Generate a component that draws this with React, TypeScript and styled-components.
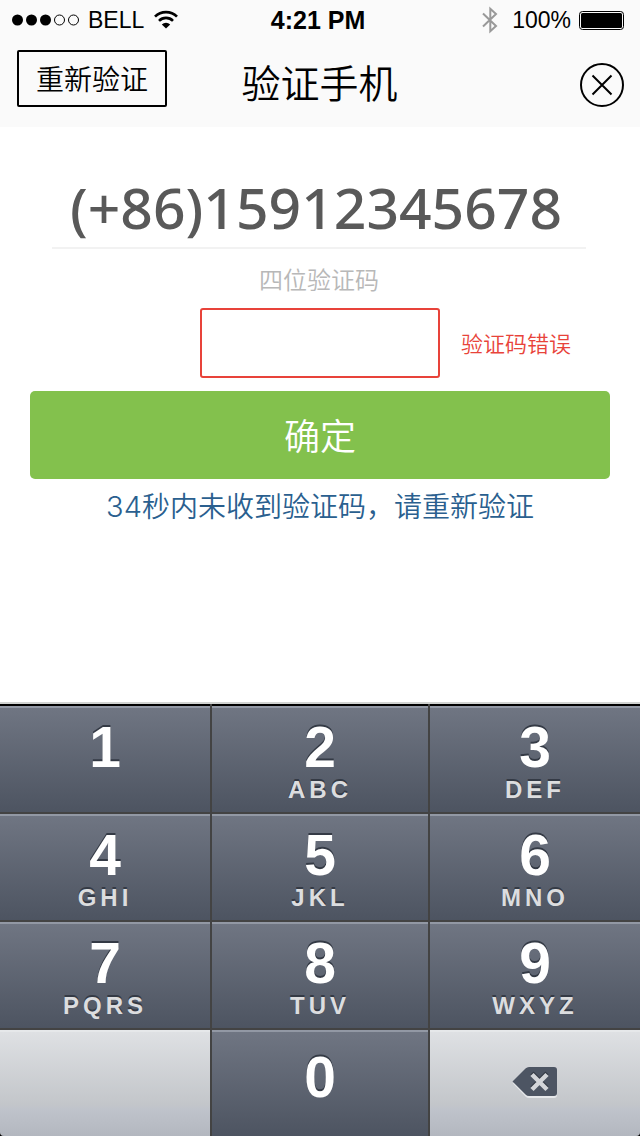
import React, { useState } from "react";
import styled, { createGlobalStyle, css } from "styled-components";

const GlobalStyle = createGlobalStyle`
  *, *::before, *::after { box-sizing: border-box; }
  body {
    margin: 0;
    background: #fff;
    font-family: "Noto Sans CJK SC", sans-serif;
    font-weight: 350;
  }
  button, input { font: inherit; color: inherit; margin: 0; padding: 0; }
  button { cursor: pointer; }
  svg { display: block; }
`;

const Page = styled.div`
  display: flex;
  flex-direction: column;
  min-height: 100vh;
`;

const Header = styled.header`
  background: #fafafa;
  color: #000;
`;

const StatusBar = styled.div`
  display: grid;
  grid-template-columns: 1fr auto 1fr;
  align-items: center;
  height: 40px;
  padding: 0 16px 0 12px;
  font: 400 23px/40px "Liberation Sans", sans-serif;
`;

const StatusGroup = styled.div<{ $end?: boolean }>`
  display: flex;
  align-items: center;
  justify-content: ${(p) => (p.$end ? "flex-end" : "flex-start")};
  gap: 8px;
`;

const Clock = styled.time`
  font-size: 25px;
  font-weight: 700;
`;

const NavBar = styled.nav`
  display: grid;
  grid-template-columns: 1fr auto 1fr;
  align-items: center;
  height: 87px;
  padding: 0 16px 11px 17px;
`;

const RetryButton = styled.button`
  justify-self: start;
  width: 150px;
  height: 57px;
  border: 2px solid #000;
  border-radius: 2px;
  background: transparent;
  font-size: 28px;
  line-height: 53px;
`;

const Title = styled.h1`
  margin: 0;
  padding: 6px 2px 0 0;
  font-size: 39px;
  font-weight: 350;
  line-height: 56px;
`;

const CloseButton = styled.button`
  justify-self: end;
  margin-top: 13px;
  border: 0;
  background: transparent;
`;

const Form = styled.form`
  flex: 1;
  display: flex;
  flex-direction: column;
  padding: 40px 30px 0;
`;

const Phone = styled.output`
  margin: 0 24px 0 22px;
  padding-right: 6px;
  border-bottom: 2px solid #f2f2f2;
  color: #595959;
  font: 500 57px/80px "Noto Sans", sans-serif;
  text-align: center;
  white-space: nowrap;
`;

const CodeLabel = styled.label`
  align-self: center;
  margin: 12px 2px 11px 0;
  color: #b8b8b8;
  font-size: 24px;
  line-height: 36px;
`;

const CodeRow = styled.div`
  display: grid;
  grid-template-columns: 1fr 240px 1fr;
  align-items: center;
  margin-bottom: 13px;
`;

const CodeInput = styled.input`
  grid-column: 2;
  width: 100%;
  height: 70px;
  border: 2px solid #e8433a;
  border-radius: 3px;
  outline: 0;
  background: #fff;
  color: #595959;
  font-size: 36px;
  text-align: center;
`;

const ErrorText = styled.span`
  padding: 0 0 2px 21px;
  color: #e8433a;
  font-size: 22px;
  line-height: 32px;
`;

const SubmitButton = styled.button`
  height: 88px;
  padding-bottom: 2px;
  border: 0;
  border-radius: 5px;
  background: #83c14d;
  color: #fff;
  font-size: 36px;
  line-height: 86px;
`;

const ResendLink = styled.a`
  align-self: center;
  margin: 6px 0 24px;
  color: #2a5f8f;
  font-size: 28px;
  line-height: 40px;
  text-decoration: none;
`;

const Seconds = styled.span`
  font-family: Inter, sans-serif;
  font-size: 29px;
  font-weight: 300;
`;

const KeypadFrame = styled.section`
  border-top: 2px solid #d0d2d0;
  background: #000;
`;

const Keypad = styled.div`
  display: grid;
  grid-template-columns: 210fr 216fr 210fr;
  grid-auto-rows: 106px;
  gap: 2px;
  padding-top: 2px;
  border-radius: 0 0 4px 4px;
  background: #434343;
  overflow: hidden;
`;

const lightKey = css`
  background: linear-gradient(#dfe1e4, #c3c6ca 70%, #bfc3cb 75%, #b3b7bf);
  box-shadow: inset 0 2px 0 #e6e8ea;
`;

const darkKey = css`
  background: linear-gradient(#707683, #4d5461);
  box-shadow: inset 0 2px 0 #9298a4;
`;

const Key = styled.button<{ $light?: boolean; $zero?: boolean }>`
  display: flex;
  flex-direction: column;
  align-items: center;
  justify-content: ${(p) => (p.$light ? "center" : "flex-start")};
  padding: ${(p) => (p.$light ? "0 0 2px" : p.$zero ? "16px 0 0" : "10px 0 0")};
  border: 0;
  ${(p) => (p.$light ? lightKey : darkKey)}

  &:nth-child(-n + 3) {
    box-shadow: inset 0 2px 0 #9298a4, 0 -2px 0 #000;
  }
`;

const Digit = styled.span`
  color: #fff;
  font: 700 57px/62px "Liberation Sans", sans-serif;
  text-shadow: 0 -2px 0 #343a45;
`;

const Letters = styled.span`
  color: #dcdddf;
  font: 700 24px/24px "Liberation Sans", sans-serif;
  letter-spacing: 4px;
  text-shadow: 0 -2px 0 #343a45;
`;

const KEYS: [string, string][] = [
  ["1", ""],
  ["2", "ABC"],
  ["3", "DEF"],
  ["4", "GHI"],
  ["5", "JKL"],
  ["6", "MNO"],
  ["7", "PQRS"],
  ["8", "TUV"],
  ["9", "WXYZ"],
];

const SignalIcon = () => (
  <svg width="68" height="14" viewBox="0 0 68 14" aria-hidden="true">
    {[0, 1, 2, 3, 4].map((i) => (
      <circle
        key={i}
        cx={5.5 + i * 14}
        cy="7"
        r={i < 3 ? 5.5 : 5}
        fill={i < 3 ? "#000" : "none"}
        stroke={i < 3 ? "none" : "#000"}
      />
    ))}
  </svg>
);

const WifiIcon = () => (
  <svg width="26" height="20" viewBox="-2 0 26 20" fill="none" stroke="#000" aria-hidden="true">
    <path d="M1 6.6a15.6 15.6 0 0 1 22 0" strokeWidth="2.7" />
    <path d="M5 10.8a9.900 9.900 0 0 1 14 0" strokeWidth="2.6" />
    <path d="M12 18.6 7.8 14.4a6 6 0 0 1 8.400 0Z" fill="#000" stroke="none" />
  </svg>
);

const BluetoothIcon = () => (
  <svg width="22" height="28" viewBox="0 0 22 28" fill="none" stroke="#999" strokeWidth="2" aria-hidden="true">
    <path d="M1 7.5 14 20 8.3 25.2V2.8L14 8 1 20.5" />
  </svg>
);

const BatteryIcon = () => (
  <svg width="45" height="19" viewBox="0 0 45 19" aria-hidden="true">
    <rect x="0.5" y="0.5" width="44" height="18" rx="3" fill="none" stroke="#000" />
    <rect x="2" y="2" width="41" height="15" rx="1.5" fill="#000" />
  </svg>
);

const CloseIcon = () => (
  <svg width="44" height="44" viewBox="0 0 44 44" fill="none" stroke="#000" strokeWidth="2" aria-hidden="true">
    <circle cx="22" cy="22" r="21" />
    <path d="m12.5 12.5 19 19m0-19-19 19" />
  </svg>
);

const DeleteIcon = () => (
  <svg width="46" height="33" viewBox="0 0 46 33" aria-hidden="true">
    <path d="M14 3h28q3 0 3 3v23q0 3-3 3H17q-2 0-3.500-1.500L1 17.500Z" fill="#e6e8eb" />
    <path d="M17 1h25q3 0 3 3v23q0 3-3 3H17q-2 0-3.500-1.500L0.500 15.500 13.500 2.500Q15 1 17 1Z" fill="#4d5563" />
    <path d="m20 7 15 15m0-15-15 15" stroke="#343a45" strokeWidth="4.500" />
    <path d="m20 8.500 15 15m0-15-15 15" stroke="#d3d5d9" strokeWidth="4.500" />
  </svg>
);

export default function App() {
  const [code, setCode] = useState("");
  const press = (digit: string) => setCode((c) => (c + digit).slice(0, 4));

  return (
    <Page>
      <GlobalStyle />
      <Header>
        <StatusBar>
          <StatusGroup>
            <SignalIcon />
            <span>BELL</span>
            <WifiIcon />
          </StatusGroup>
          <Clock>4:21 PM</Clock>
          <StatusGroup $end>
            <BluetoothIcon />
            <span>100%</span>
            <BatteryIcon />
          </StatusGroup>
        </StatusBar>
        <NavBar>
          <RetryButton type="button">重新验证</RetryButton>
          <Title>验证手机</Title>
          <CloseButton type="button" aria-label="关闭">
            <CloseIcon />
          </CloseButton>
        </NavBar>
      </Header>

      <Form onSubmit={(e) => e.preventDefault()}>
        <Phone>(+86)15912345678</Phone>
        <CodeLabel htmlFor="code">四位验证码</CodeLabel>
        <CodeRow>
          <CodeInput
            id="code"
            inputMode="numeric"
            maxLength={4}
            value={code}
            aria-invalid="true"
            aria-describedby="code-error"
            onChange={(e) => setCode(e.target.value)}
          />
          <ErrorText id="code-error">验证码错误</ErrorText>
        </CodeRow>
        <SubmitButton type="submit">确定</SubmitButton>
        <ResendLink href="#resend">
          <Seconds>34</Seconds>秒内未收到验证码，请重新验证
        </ResendLink>
      </Form>

      <KeypadFrame>
        <Keypad>
          {KEYS.map(([digit, letters]) => (
            <Key key={digit} type="button" onClick={() => press(digit)}>
              <Digit>{digit}</Digit>
              {letters && <Letters>{letters}</Letters>}
            </Key>
          ))}
          <Key type="button" $light aria-label="空白" />
          <Key type="button" $zero onClick={() => press("0")}>
            <Digit>0</Digit>
          </Key>
          <Key type="button" $light aria-label="删除" onClick={() => setCode((c) => c.slice(0, -1))}>
            <DeleteIcon />
          </Key>
        </Keypad>
      </KeypadFrame>
    </Page>
  );
}
